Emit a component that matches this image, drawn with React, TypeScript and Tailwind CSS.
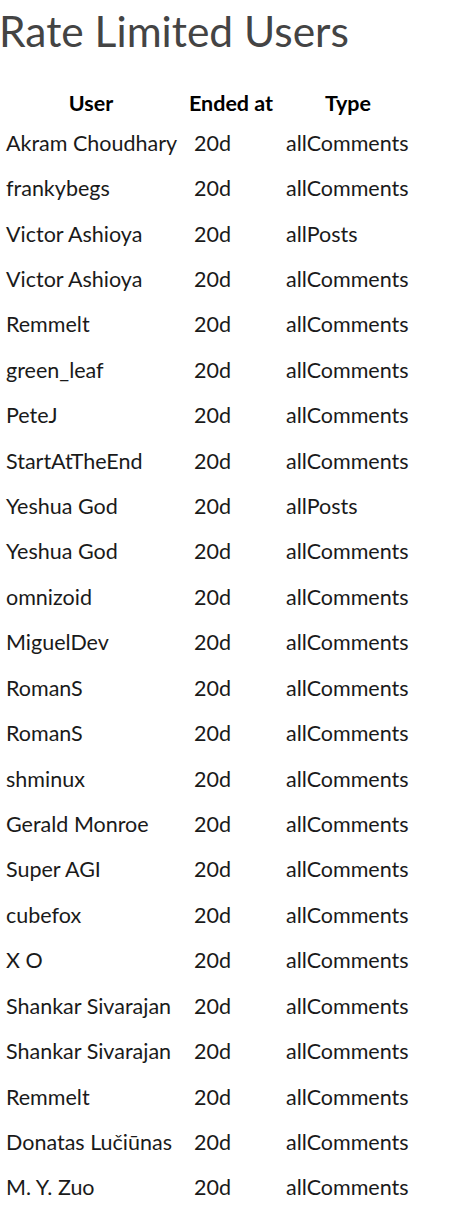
import React from "react";

const rows: [string, string][] = [
  ["Akram Choudhary", "allComments"],
  ["frankybegs", "allComments"],
  ["Victor Ashioya", "allPosts"],
  ["Victor Ashioya", "allComments"],
  ["Remmelt", "allComments"],
  ["green_leaf", "allComments"],
  ["PeteJ", "allComments"],
  ["StartAtTheEnd", "allComments"],
  ["Yeshua God", "allPosts"],
  ["Yeshua God", "allComments"],
  ["omnizoid", "allComments"],
  ["MiguelDev", "allComments"],
  ["RomanS", "allComments"],
  ["RomanS", "allComments"],
  ["shminux", "allComments"],
  ["Gerald Monroe", "allComments"],
  ["Super AGI", "allComments"],
  ["cubefox", "allComments"],
  ["X O", "allComments"],
  ["Shankar Sivarajan", "allComments"],
  ["Shankar Sivarajan", "allComments"],
  ["Remmelt", "allComments"],
  ["Donatas Lučiūnas", "allComments"],
  ["M. Y. Zuo", "allComments"],
];

export default function App() {
  return (
    <div className="w-[452px] h-[1216px] overflow-hidden bg-white" style={{ fontFamily: "Lato, 'Open Sans', sans-serif" }}>
      <h1 className="text-[42.5px] leading-[52px] pt-[5px] ml-[-1px] text-[#444444] font-normal h-[83.68px] whitespace-nowrap">
        Rate Limited Users
      </h1>
      <table className="table-fixed border-collapse text-[21.5px] text-[#1a1a1a]">
        <colgroup>
          <col className="w-[182px]" />
          <col className="w-[98px]" />
          <col className="w-[136px]" />
        </colgroup>
        <thead>
          <tr>
            <th className="pt-[7px] leading-[24px] font-bold text-center text-black whitespace-nowrap">User</th>
            <th className="pt-[7px] leading-[24px] font-bold text-center text-black whitespace-nowrap">Ended at</th>
            <th className="pt-[7px] leading-[24px] font-bold text-center text-black whitespace-nowrap">Type</th>
          </tr>
        </thead>
        <tbody>
          {rows.map(([u, t], i) => (
            <tr key={i} className="h-[45.43px]">
              <td className="align-top pt-[16px] pl-[6px] leading-[24px] whitespace-nowrap">{u}</td>
              <td className="align-top pt-[16px] pl-[12px] leading-[24px]">20d</td>
              <td className="align-top pt-[16px] pl-[6px] leading-[24px] whitespace-nowrap">{t}</td>
            </tr>
          ))}
        </tbody>
      </table>
    </div>
  );
}
